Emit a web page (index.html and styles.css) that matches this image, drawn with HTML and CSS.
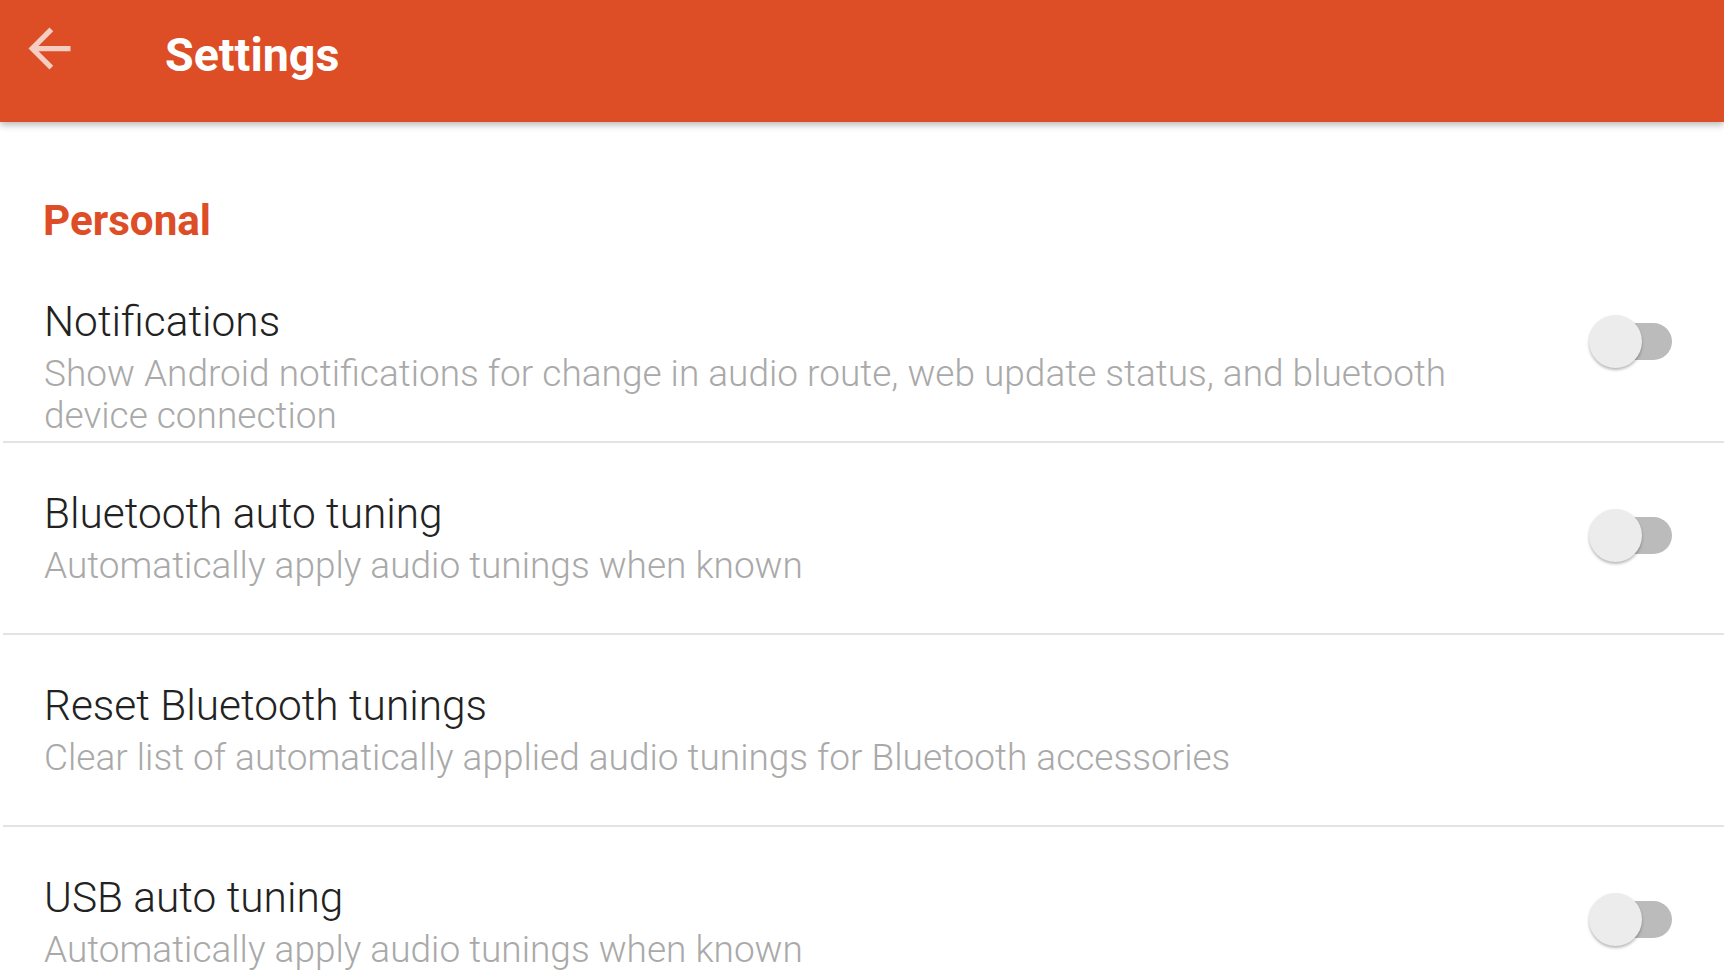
FILE: index.html
```html
<!DOCTYPE html>
<html lang="en">
<head>
<meta charset="utf-8">
<title>Settings</title>
<link rel="stylesheet" href="styles.css">
</head>
<body>
<header class="toolbar">
  <svg class="back" viewBox="0 0 24 24" width="63" height="63" aria-hidden="true">
    <path d="M20 11H7.83l5.59-5.59L12 4l-8 8 8 8 1.41-1.41L7.83 13H20v-2z"/>
  </svg>
  <h1 class="toolbar-title">Settings</h1>
</header>
<main class="prefs">
  <h2 class="category">Personal</h2>
  <div class="pref pref-first">
    <div class="pref-text">
      <div class="pref-title">Notifications</div>
      <div class="pref-summary">Show Android notifications for change in audio route, web update status, and bluetooth device connection</div>
    </div>
    <div class="switch"><span class="track"></span><span class="thumb"></span></div>
  </div>
  <div class="pref">
    <div class="pref-text">
      <div class="pref-title">Bluetooth auto tuning</div>
      <div class="pref-summary">Automatically apply audio tunings when known</div>
    </div>
    <div class="switch"><span class="track"></span><span class="thumb"></span></div>
  </div>
  <div class="pref">
    <div class="pref-text">
      <div class="pref-title">Reset Bluetooth tunings</div>
      <div class="pref-summary">Clear list of automatically applied audio tunings for Bluetooth accessories</div>
    </div>
  </div>
  <div class="pref">
    <div class="pref-text">
      <div class="pref-title">USB auto tuning</div>
      <div class="pref-summary">Automatically apply audio tunings when known</div>
    </div>
    <div class="switch"><span class="track"></span><span class="thumb"></span></div>
  </div>
</main>
</body>
</html>
```

FILE: styles.css
```css
html, body {
  margin: 0;
  padding: 0;
  background: #ffffff;
  overflow: hidden;
}
body {
  font-family: Roboto, "Noto Sans", "Liberation Sans", sans-serif;
  width: 1724px;
  height: 970px;
}
.toolbar {
  position: relative;
  z-index: 2;
  height: 122px;
  background: #dd4d26;
  display: flex;
  align-items: flex-start;
  box-shadow: 0 3px 7px rgba(0, 0, 0, 0.28);
}
.back {
  margin-left: 18px;
  margin-top: 17px;
  fill: rgba(255, 255, 255, 0.72);
  flex: none;
}
.toolbar-title {
  margin: 28px 0 0 84px;
  font-size: 46.6px;
  line-height: 54px;
  font-weight: 700;
  color: #ffffff;
}
.prefs {
  display: flex;
  flex-direction: column;
}
.category {
  margin: 74px 0 0 43px;
  font-size: 42.2px;
  line-height: 50px;
  font-weight: 700;
  color: #dd4d26;
}
.pref {
  display: flex;
  align-items: center;
  margin-left: 3px;
  padding: 46px 52px 46px 41px;
  border-bottom: 2px solid #e3e3e3;
}
.pref-first {
  align-items: flex-start;
  padding-top: 51px;
  padding-bottom: 4px;
}
.pref-text {
  flex: 1;
  min-width: 0;
  margin-right: 49px;
}
.pref-title {
  font-size: 42.4px;
  line-height: 50px;
  font-weight: 300;
  color: #222222;
}
.pref-summary {
  margin-top: 6px;
  font-size: 37px;
  line-height: 42px;
  font-weight: 300;
  color: #a9a9a9;
}
.switch {
  position: relative;
  flex: none;
  width: 83px;
  height: 53px;
  margin-bottom: 5px;
}
.pref-first .switch {
  margin-top: 18px;
}
.track {
  position: absolute;
  right: 0;
  top: 8px;
  width: 72px;
  height: 37px;
  border-radius: 19px;
  background: #bbbbbb;
}
.thumb {
  position: absolute;
  left: 0;
  top: 0;
  width: 53px;
  height: 53px;
  border-radius: 50%;
  background: #ececec;
  box-shadow: 0 2px 3px rgba(0, 0, 0, 0.28);
}
```
